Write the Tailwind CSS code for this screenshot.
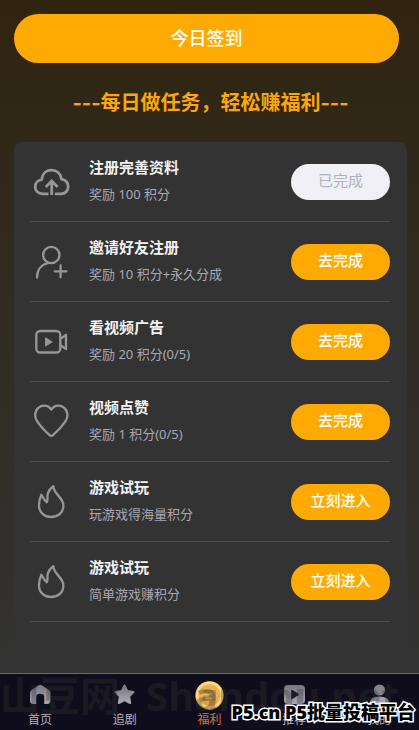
<!DOCTYPE html>
<html lang="zh-CN">
<head>
<meta charset="utf-8">
<meta name="viewport" content="width=device-width, initial-scale=1">
<title>福利</title>
<script src="https://cdn.jsdelivr.net/npm/@tailwindcss/browser@4"></script>
</head>
<body class="flex min-h-screen flex-col bg-[#333333] font-['Noto_Sans','Noto_Sans_CJK_SC',sans-serif]">
<main class="flex flex-1 flex-col bg-linear-to-b from-[#30240f] via-[#312c22] to-[#333333] pt-[14px] pr-3 pl-[14px]">
  <button type="button" class="mr-2 h-[49px] rounded-full bg-[#ffaa02] pb-[3px] font-['Noto_Sans_CJK_SC',sans-serif] text-[18px] leading-6 font-medium text-white">今日签到</button>
  <h1 class="mt-6 text-center font-['Inter','Noto_Sans_CJK_SC',sans-serif] text-[20px] leading-8 font-bold text-[#fba60b]">---每日做任务，轻松赚福利---</h1>
  <ul class="mt-[23px] rounded-lg bg-[#333333] pr-[17px] pb-9 pl-4">
    <li class="flex h-20 items-center border-b border-[#4a4a4a]">
      <svg class="size-10 shrink-0" viewBox="0 0 40 40" fill="none" stroke="#979797" stroke-width="2.8"><path d="M18.5 31.8H12.5C8.2 31.8 5.2 28.8 5.2 25C5.2 21 8 18.1 11.6 17.6C12.3 11.9 16 8.1 21.4 8.1C26.8 8.1 30.7 11.7 31.5 17.2C35.3 18 38.2 20.8 38.2 24.8C38.2 29 35 31.8 31 31.8H24.8M21.7 33V19.6M15.8 24.9L21.7 19L27.6 24.9"/></svg>
      <div class="ml-[19px] flex-1 pb-[2px]"><h2 class="text-[15px] leading-5 font-bold text-[#f2f2f2]">注册完善资料</h2><p class="mt-[7px] text-[13px] leading-5 text-[#a9a8b3]">奖励 100 积分</p></div>
      <button type="button" disabled class="h-9 w-[99px] rounded-full bg-[#f0f0f5] pb-[3px] text-[15px] leading-5 text-[#adb3be]">已完成</button>
    </li>
    <li class="flex h-20 items-center border-b border-[#4a4a4a]">
      <svg class="size-10 shrink-0" viewBox="0 0 40 40" fill="none" stroke="#979797" stroke-width="2.3" stroke-linecap="round"><circle cx="21.3" cy="13" r="8.2"/><path d="M7 35.5C7.2 28 11.3 22.6 17.8 21.2M24.8 29.3H36.5M30.6 23.3V35.3"/></svg>
      <div class="ml-[19px] flex-1 pb-[2px]"><h2 class="text-[15px] leading-5 font-bold text-[#f2f2f2]">邀请好友注册</h2><p class="mt-[7px] text-[13px] leading-5 text-[#a9a8b3]">奖励 10 积分+永久分成</p></div>
      <button type="button" class="h-9 w-[99px] rounded-full bg-[#ffaa02] pb-[3px] text-[15px] leading-5 font-medium text-white">去完成</button>
    </li>
    <li class="flex h-20 items-center border-b border-[#4a4a4a]">
      <svg class="size-10 shrink-0" viewBox="0 0 40 40" fill="none" stroke="#979797" stroke-width="2.3" stroke-linejoin="round"><rect x="6.3" y="9" width="24" height="21.5" rx="4"/><path d="M31 16.5L36 12.8V27.2L31 23.5"/><path d="M15.7 16V23.8L21.8 19.9Z" fill="#979797" stroke-width="1.2"/></svg>
      <div class="ml-[19px] flex-1 pb-[2px]"><h2 class="text-[15px] leading-5 font-bold text-[#f2f2f2]">看视频广告</h2><p class="mt-[7px] text-[13px] leading-5 text-[#a9a8b3]">奖励 20 积分(0/5)</p></div>
      <button type="button" class="h-9 w-[99px] rounded-full bg-[#ffaa02] pb-[3px] text-[15px] leading-5 font-medium text-white">去完成</button>
    </li>
    <li class="flex h-20 items-center border-b border-[#4a4a4a]">
      <svg class="size-10 shrink-0" viewBox="0 0 40 40" fill="none" stroke="#979797" stroke-width="2.3" stroke-linejoin="round"><path d="M21.3 7.5C18.3 3 12.3 2.4 8.6 5.7C4.4 9.3 4.2 15 7.2 19.4C10.2 23.8 15 29 19.6 33.2Q21.3 34.5 23 33.2C27.8 29 32.4 23.8 35.4 19.4C38.4 15 38.2 9.3 34 5.7C30.3 2.4 24.3 3 21.3 7.5Z"/></svg>
      <div class="ml-[19px] flex-1 pb-[2px]"><h2 class="text-[15px] leading-5 font-bold text-[#f2f2f2]">视频点赞</h2><p class="mt-[7px] text-[13px] leading-5 text-[#a9a8b3]">奖励 1 积分(0/5)</p></div>
      <button type="button" class="h-9 w-[99px] rounded-full bg-[#ffaa02] pb-[3px] text-[15px] leading-5 font-medium text-white">去完成</button>
    </li>
    <li class="flex h-20 items-center border-b border-[#4a4a4a]">
      <svg class="size-10 shrink-0" viewBox="0 0 40 40" fill="none" stroke="#979797" stroke-width="2.3" stroke-linejoin="round"><path d="M23.3 4.2C23.6 12 33.4 15.5 33.4 23.5C33.4 30.5 28 35 21.2 35C14.4 35 9 30.3 9 23.4C9 19.4 10 16 11.3 12.8C13.5 15.3 14 18.6 16.8 20.2C18.2 18.8 16.9 14.9 17.8 11.6C18.6 8.7 20.5 6.4 23.3 4.2Z"/></svg>
      <div class="ml-[19px] flex-1 pb-[2px]"><h2 class="text-[15px] leading-5 font-bold text-[#f2f2f2]">游戏试玩</h2><p class="mt-[7px] text-[13px] leading-5 text-[#a9a8b3]">玩游戏得海量积分</p></div>
      <button type="button" class="h-9 w-[99px] rounded-full bg-[#ffaa02] pb-[3px] text-[15px] leading-5 font-medium text-white">立刻进入</button>
    </li>
    <li class="flex h-20 items-center border-b border-[#4a4a4a]">
      <svg class="size-10 shrink-0" viewBox="0 0 40 40" fill="none" stroke="#979797" stroke-width="2.3" stroke-linejoin="round"><path d="M23.3 4.2C23.6 12 33.4 15.5 33.4 23.5C33.4 30.5 28 35 21.2 35C14.4 35 9 30.3 9 23.4C9 19.4 10 16 11.3 12.8C13.5 15.3 14 18.6 16.8 20.2C18.2 18.8 16.9 14.9 17.8 11.6C18.6 8.7 20.5 6.4 23.3 4.2Z"/></svg>
      <div class="ml-[19px] flex-1 pb-[2px]"><h2 class="text-[15px] leading-5 font-bold text-[#f2f2f2]">游戏试玩</h2><p class="mt-[7px] text-[13px] leading-5 text-[#a9a8b3]">简单游戏赚积分</p></div>
      <button type="button" class="h-9 w-[99px] rounded-full bg-[#ffaa02] pb-[3px] text-[15px] leading-5 font-medium text-white">立刻进入</button>
    </li>
  </ul>
</main>
<nav class="relative flex justify-between border-t border-[#6b6b70] bg-[#0f0d1c] px-3 pt-[7px] text-[12px] leading-5 text-[#b3b1be]">
  <a href="#" class="flex w-14 flex-col items-center">
    <svg class="size-[29px]" viewBox="0 0 29 29"><defs><linearGradient id="g" x1="0" y1="0" x2="0" y2="1"><stop offset="0" stop-color="#777780"/><stop offset="1" stop-color="#aaa9b3"/></linearGradient></defs><path fill="url(#g)" d="M4 12.1Q4 10.1 5.5 8.9L12.2 4.4Q14.2 3.2 16.2 4.4L22.9 8.9Q24.4 10.1 24.4 12.1V19.5Q24.4 23 20.9 23H18.2V16Q18.2 12.8 14.2 12.8T10.2 16V23H7.5Q4 23 4 19.5Z"/></svg>
    <span>首页</span>
  </a>
  <a href="#" class="flex w-14 flex-col items-center">
    <svg class="size-[29px]" viewBox="0 0 29 29"><path fill="url(#g)" stroke="url(#g)" stroke-width="2" stroke-linejoin="round" d="M14.5 4.5L17.3 10L23.5 11L19.2 15.4L20.2 22L14.5 19.2L8.8 22L9.8 15.4L5.5 11L11.7 10Z"/></svg>
    <span>追剧</span>
  </a>
  <a href="#" aria-current="page" class="flex w-14 flex-col items-center text-[#d8743e]">
    <svg class="size-[29px]" viewBox="0 0 29 29"><circle cx="14.5" cy="14.5" r="14.2" fill="#e5a33a"/><circle cx="14.5" cy="14" r="13.6" fill="#f7da85"/><circle cx="14.5" cy="14.3" r="11" fill="#e9b252"/><path d="M8.5 9H19.5Q21.2 9 21.2 11V20.5H9.5Q7.5 20.5 7.5 18V16.5Q7.5 14.5 9.5 14.5H17V12H8.5Z" fill="#b98d48"/><path d="M10.5 16.4H17V18.3H10.5Z" fill="#f3c978"/><path d="M7 21Q14.5 16.8 22 21Q18.5 25 14.5 25T7 21Z" fill="#e99a43"/></svg>
    <span>福利</span>
  </a>
  <a href="#" class="flex w-14 flex-col items-center">
    <svg class="size-[29px]" viewBox="0 0 29 29"><rect x="4" y="4" width="21" height="19" rx="4" fill="url(#g)"/><path d="M11.2 9.5Q11.2 8.2 12.4 8.9L18.3 12.6Q19.5 13.4 18.3 14.2L12.4 18Q11.2 18.7 11.2 17.4Z" fill="#1c1a28"/></svg>
    <span>推荐</span>
  </a>
  <a href="#" class="flex w-14 flex-col items-center">
    <svg class="size-[29px]" viewBox="0 0 29 29"><circle cx="14.5" cy="9" r="5.6" fill="#85858e"/><path d="M4.5 22.5Q5 15.5 14.5 15.5T24.5 22.5Z" fill="#a3a2ad"/></svg>
    <span>我的</span>
  </a>
  <div aria-hidden="true" class="pointer-events-none absolute inset-x-0 top-0 flex gap-[26px] text-[40px] leading-11 font-bold whitespace-nowrap text-[#333333]/35"><span>山豆网</span><span>Shandou.net</span></div>
  <div class="pointer-events-none absolute right-1 bottom-[6px] font-['Noto_Sans','Noto_Sans_CJK_SC',sans-serif] text-[18px] leading-6 font-black whitespace-nowrap text-black [-webkit-text-stroke:3px_white] [paint-order:stroke_fill]">P5.cn P5批量投稿平台</div>
</nav>
</body>
</html>
